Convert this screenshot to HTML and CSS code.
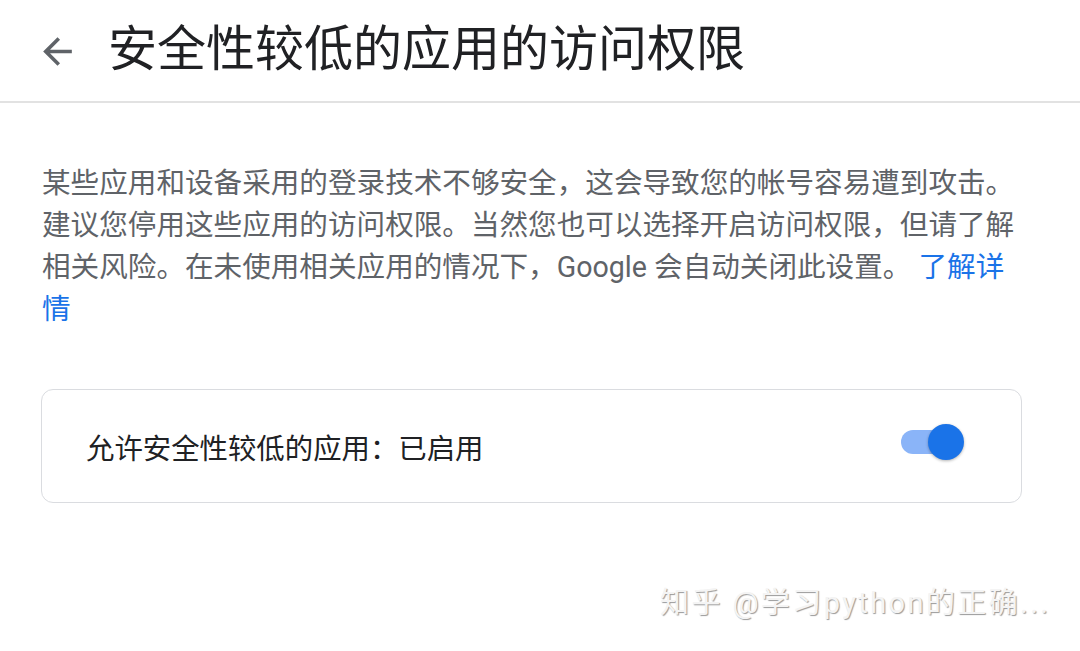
FILE: index.html
```html
<!DOCTYPE html>
<html lang="zh-CN">
<head>
    <meta charset="UTF-8">
    <meta name="viewport" content="width=device-width, initial-scale=1.0">
    <title>安全性较低的应用的访问权限</title>
    <link rel="stylesheet" href="styles.css">
</head>
<body>
    <div class="topbar">
        <a class="back" href="#">
            <svg viewBox="0 0 24 24" width="43" height="43"><path d="M20 11H7.83l5.59-5.59L12 4l-8 8 8 8 1.41-1.41L7.83 13H20v-2z" fill="#5f6368"/></svg>
        </a>
        <h1>安全性较低的应用的访问权限</h1>
    </div>
    <div class="content">
        <p class="intro">某些应用和设备采用的登录技术不够安全，这会导致您的帐号容易遭到攻击。<br>建议您停用这些应用的访问权限。当然您也可以选择开启访问权限，但请了解<br>相关风险。在未使用相关应用的情况下，Google 会自动关闭此设置。 <a href="#">了解详情</a></p>
        <div class="card">
            <span class="label">允许安全性较低的应用：已启用</span>
            <div class="switch on">
                <div class="track"></div>
                <div class="thumb"></div>
            </div>
        </div>
    </div>
    <div class="watermark">知乎 @学习python的正确...</div>
</body>
</html>
```

FILE: styles.css
```css
body {
    font-family: Roboto, "Noto Sans CJK SC", sans-serif;
    margin: 0;
    padding: 0;
    background-color: #fff;
    width: 1080px;
    height: 651px;
    overflow: hidden;
    position: relative;
}
.topbar {
    height: 101px;
    display: flex;
    align-items: center;
    border-bottom: 2px solid #e2e2e2;
}
.back {
    display: flex;
    margin-left: 36px;
    margin-right: 29px;
    margin-top: 2px;
}
.topbar h1 {
    margin: 0;
    font-size: 49px;
    font-weight: 400;
    color: #202124;
    line-height: 1;
    margin-bottom: 2px;
}
.content {
    padding: 0 58px 0 41px;
}
.intro {
    margin: 59px 0 0 1px;
    font-size: 28.6px;
    line-height: 42px;
    color: #5f6368;
}
.intro a {
    color: #1a73e8;
    text-decoration: none;
}
.card {
    margin-top: 59px;
    height: 112px;
    border: 1px solid #dadce0;
    border-radius: 12px;
    display: flex;
    align-items: center;
    justify-content: space-between;
    padding: 0 57px 0 44px;
}
.label {
    font-size: 28.4px;
    color: #202124;
    margin-top: 1px;
}
.switch {
    position: relative;
    width: 63px;
    height: 36px;
    margin-top: -8px;
}
.track {
    position: absolute;
    left: 0;
    top: 6px;
    width: 54px;
    height: 24px;
    border-radius: 12px;
    background-color: #8ab4f8;
}
.thumb {
    position: absolute;
    right: 0;
    top: 0;
    width: 36px;
    height: 36px;
    border-radius: 50%;
    background-color: #1a73e8;
    box-shadow: 0 1px 3px rgba(0, 0, 0, 0.3);
}
.watermark {
    position: absolute;
    left: 660px;
    top: 579px;
    font-size: 29px;
    letter-spacing: 2.4px;
    color: #f4f4f4;
    text-shadow: 1px 1px 1px #9a9a9a;
    white-space: nowrap;
}
```
